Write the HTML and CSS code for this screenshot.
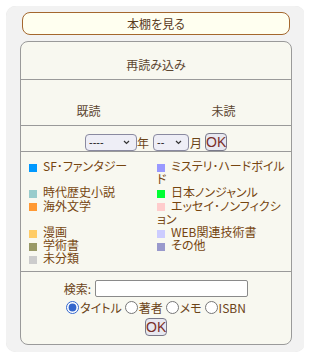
FILE: index.html
```html
<!DOCTYPE html>
<html lang="ja">
<head>
<meta charset="utf-8">
<title>本棚</title>
<link rel="stylesheet" href="styles.css">
</head>
<body>
<div class="panel">
  <button class="shelf-btn" type="button">本棚を見る</button>
  <div class="box">
    <div class="row reload">再読み込み</div>
    <div class="row tabs"><span class="tab">既読</span><span class="tab">未読</span></div>
    <div class="row date">
      <select class="sel sel-year"><option>----</option></select><span class="unit">年</span>
      <select class="sel sel-month"><option>--</option></select><span class="unit unit-m">月</span>
      <button class="ok ok-date" type="button">OK</button>
    </div>
    <ul class="row legend">
      <li><i class="sq c-sf"></i>SF･ファンタジー</li>
      <li><i class="sq c-mys"></i>ミステリ･ハードボイルド</li>
      <li><i class="sq c-jidai"></i>時代歴史小説</li>
      <li><i class="sq c-jp"></i>日本ノンジャンル</li>
      <li><i class="sq c-kaigai"></i>海外文学</li>
      <li><i class="sq c-essay"></i>エッセイ･ノンフィクション</li>
      <li><i class="sq c-manga"></i>漫画</li>
      <li><i class="sq c-web"></i>WEB関連技術書</li>
      <li><i class="sq c-gaku"></i>学術書</li>
      <li><i class="sq c-other"></i>その他</li>
      <li><i class="sq c-none"></i>未分類</li>
    </ul>
    <div class="row search">
      <div class="search-line"><label for="q">検索:</label><input id="q" class="q" type="text"></div>
      <div class="radio-line">
        <label><input type="radio" name="t" checked>タイトル</label>
        <label><input type="radio" name="t">著者</label>
        <label><input type="radio" name="t">メモ</label>
        <label><input type="radio" name="t">ISBN</label>
      </div>
      <button class="ok" type="button">OK</button>
    </div>
  </div>
</div>
</body>
</html>
```

FILE: styles.css
```css
html, body { background: #ffffff; }
body {
  margin: 6px;
  font-family: "Noto Sans CJK JP", sans-serif;
  font-size: 12px;
  color: #6b4418;
}
.panel {
  width: 299px;
  box-sizing: border-box;
  padding: 6px 13px 7px 14px;
  background: #f2f2f2;
  border-radius: 10px;
  box-shadow: 0 0 1px rgba(0,0,0,0.15);
}
.shelf-btn {
  display: block;
  box-sizing: border-box;
  width: 268px;
  height: 23px;
  margin: 0 2px 6px;
  padding: 0;
  background: #fffff0;
  border: 1px solid #a4672e;
  border-radius: 8px;
  font-family: inherit;
  font-size: 12px;
  color: #5a3c1e;
  font-feature-settings: "palt";
}
.box {
  border: 1px solid #9a9a9a;
  border-radius: 8px;
  background: #f8f8f0;
  overflow: hidden;
}
.row { border-bottom: 1px solid #9a9a9a; }
.row:last-child { border-bottom: none; }
.reload {
  padding: 13px 0 5px;
  line-height: 19px;
  text-align: center;
  color: #5c4630;
  font-feature-settings: "palt";
}
.tabs {
  display: flex;
  padding: 21px 0 5px;
  line-height: 19px;
  color: #5c4630;
}
.tab { flex: 1; text-align: center; }
.date {
  display: flex;
  justify-content: center;
  align-items: center;
  height: 26px;
  box-sizing: border-box;
  padding: 7px 0 0;
  color: #6b4418;
}
.unit { width: 12px; text-align: center; }
.sel {
  -webkit-appearance: none;
  appearance: none;
  height: 17px;
  box-sizing: border-box;
  font-family: "Liberation Sans", sans-serif;
  font-size: 11px;
  line-height: 15px;
  color: #222;
  background-color: #eeeef6;
  background-image: url("data:image/svg+xml,%3Csvg xmlns='http://www.w3.org/2000/svg' width='7' height='5' viewBox='0 0 7 5'%3E%3Cpath d='M1 1l2.5 2.5L6 1' fill='none' stroke='%23333' stroke-width='1.2'/%3E%3C/svg%3E");
  background-repeat: no-repeat;
  background-position: right 6px center;
  border: 1px solid #8a8aa0;
  border-radius: 4px;
  padding: 0 0 0 3px;
  margin: 0;
}
.sel-year { width: 52px; }
.sel-month { width: 36px; margin-left: 4px; }
.unit-m { margin-left: 1px; }
.ok {
  width: 22px;
  height: 18px;
  box-sizing: border-box;
  padding: 0;
  margin: 0;
  font-family: "Liberation Sans", sans-serif;
  font-size: 14px;
  line-height: 16px;
  color: #7a2f2a;
  background: #e8e8f0;
  border: 1px solid #7a7a8a;
  border-radius: 4px;
}
.ok-date { margin-left: 3px; }
.legend {
  list-style: none;
  margin: 0;
  padding: 7px 6px 6px 8px;
  display: grid;
  grid-template-columns: 128px 128px;
  line-height: 13.2px;
  color: #76450f;
  font-feature-settings: "palt";
}
.sq {
  display: inline-block;
  width: 8px;
  height: 8px;
  margin-right: 6px;
  vertical-align: -0.5px;
}
.c-sf { background: #0099ff; }
.c-mys { background: #9999ff; }
.c-jidai { background: #99cccc; }
.c-jp { background: #00ff33; }
.c-kaigai { background: #ff9933; }
.c-essay { background: #ffcccc; }
.c-manga { background: #ffcc66; }
.c-web { background: #ccccff; }
.c-gaku { background: #999966; }
.c-other { background: #9999cc; }
.c-none { background: #cccccc; }
.search {
  padding: 8px 0 8px;
  display: flex;
  flex-direction: column;
  align-items: center;
  color: #6b4418;
}
.search-line { display: flex; align-items: center; gap: 4px; height: 17px; }
.q {
  width: 153px;
  height: 17px;
  box-sizing: border-box;
  border: 1px solid #8a8a8a;
  border-radius: 2px;
  background: #fff;
  padding: 0 2px;
  margin: 0;
}
.radio-line {
  display: flex;
  align-items: center;
  height: 20px;
  margin-top: 1px;
  font-feature-settings: "palt";
}
.radio-line label { display: flex; align-items: center; margin-left: 3px; }
.radio-line label:first-child { margin-left: 0; }
.radio-line input {
  margin: 0 1px 0 0;
  width: 13px;
  height: 13px;
  accent-color: #3366cc;
}
```
